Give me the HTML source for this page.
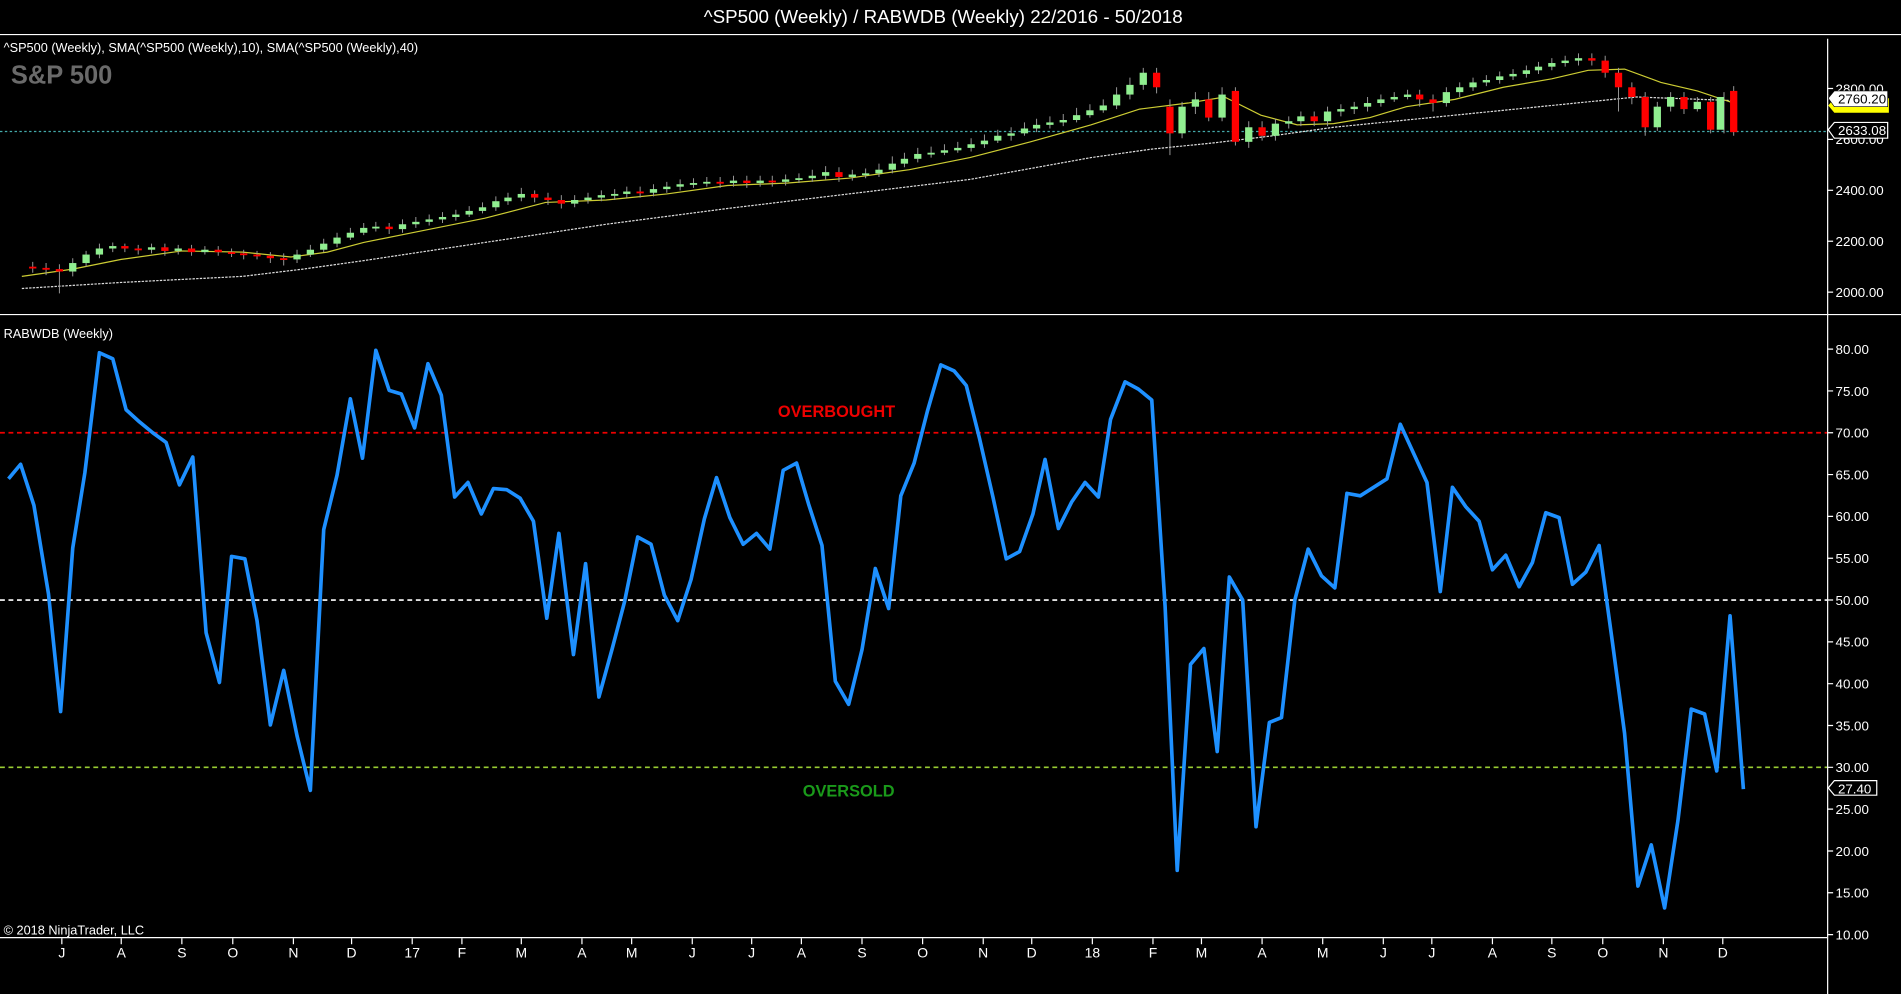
<!DOCTYPE html>
<html><head><meta charset="utf-8">
<style>
html,body{margin:0;padding:0;background:#000;overflow:hidden}
svg{display:block}
text{font-family:"Liberation Sans",Arial,sans-serif}
</style></head>
<body>
<svg width="1901" height="994" viewBox="0 0 1568 820" preserveAspectRatio="none" xmlns="http://www.w3.org/2000/svg">
<rect width="1568" height="820" fill="#000"/>
<text x="778" y="19" fill="#fff" font-size="15.5" text-anchor="middle">^SP500 (Weekly) / RABWDB (Weekly)  22/2016 - 50/2018</text>
<line x1="0" y1="28.5" x2="1568" y2="28.5" stroke="#fff" stroke-width="1"/>
<line x1="0" y1="259.5" x2="1568" y2="259.5" stroke="#fff" stroke-width="1"/>
<line x1="0" y1="773.5" x2="1507" y2="773.5" stroke="#fff" stroke-width="1"/>
<line x1="1507.5" y1="32" x2="1507.5" y2="820" stroke="#fff" stroke-width="1"/>
<text x="3" y="43" fill="#fff" font-size="10.5">^SP500 (Weekly),  SMA(^SP500 (Weekly),10),  SMA(^SP500 (Weekly),40)</text>
<text x="9" y="69" fill="#6a6a6a" font-size="21" font-weight="bold">S&amp;P 500</text>
<text x="3" y="279" fill="#fff" font-size="10.5">RABWDB (Weekly)</text>
<text x="3" y="771" fill="#fff" font-size="10.5">© 2018 NinjaTrader, LLC</text>

<line x1="0" y1="108.5" x2="1507" y2="108.5" stroke="#4aa" stroke-dasharray="2,2" stroke-width="1"/>

<!-- SMAs -->
<polyline fill="none" stroke="#ddd" stroke-width="1" stroke-dasharray="2,1" points="18,238 100,233 200,228 250,222 300,215 400,200 500,185 600,172 700,160 800,148 900,130 950,123 1000,118 1050,112 1100,105 1200,95 1300,85 1350,80 1430,83"/>
<polyline fill="none" stroke="#cc3" stroke-width="1" points="18,228 60,222 100,214 150,207 200,208 240,212 270,208 300,200 350,190 400,180 450,167 500,165 550,160 600,153 650,151 700,147 750,140 800,130 850,117 900,103 940,90 980,85 1010,80 1040,95 1070,103 1100,102 1130,97 1160,88 1200,82 1240,72 1280,65 1310,58 1340,57 1370,68 1400,75 1430,85"/>

<!-- wicks -->
<path stroke="#999" stroke-width="0.8" fill="none" d="M27 216V225M38 217V227M49 218V242M60 213V228M71 207V220M82 201V213M93 200V208M103 201V208M114 202V210M125 201V209M136 201V211M147 202V210M158 202V211M169 203V210M180 203V211M191 205V212M201 206V214M212 207V214M223 208V217M234 209V219M245 206V217M256 202V212M267 197V208M278 192V204M289 188V198M300 184V194M310 183V191M321 184V193M332 181V192M343 179V188M354 177V186M365 175V184M376 173V182M387 170V179M398 167V176M409 162V174M419 159V169M430 155V166M441 157V167M452 159V169M463 161V172M474 161V171M485 159V168M496 157V166M507 156V165M517 154V163M528 154V163M539 152V162M550 150V159M561 148V157M572 147V155M583 146V154M594 146V155M605 145V154M616 145V155M627 145V154M637 145V154M648 144V153M659 143V151M670 140V150M681 137V148M692 138V150M703 140V149M714 139V147M725 135V146M736 129V143M746 126V138M757 122V134M768 121V130M779 119V128M790 117V126M801 114V125M812 111V122M823 107V118M834 105V116M845 101V112M855 98V109M866 96V106M877 94V104M888 89V101M899 86V97M910 82V93M921 72V90M932 64V82M943 56V74M954 56V77M965 82V128M975 84V114M986 76V94M997 76V100M1008 72V100M1019 72V120M1030 100V122M1041 100V116M1052 98V116M1063 96V106M1073 92V104M1084 92V104M1095 88V104M1106 86V96M1117 84V94M1128 80V92M1139 78V88M1150 76V84M1161 74V82M1171 74V88M1182 78V92M1193 72V88M1204 68V80M1215 64V75M1226 62V71M1237 59V69M1248 57V66M1259 54V64M1269 51V61M1280 48V58M1291 46V55M1302 44V54M1313 44V54M1324 46V64M1335 56V92M1346 68V86M1357 76V112M1367 84V108M1378 76V92M1389 76V94M1400 80V92M1411 80V110M1422 76V110M1430 71V112"/>
<!-- red bodies -->
<g fill="#f00">
<rect x="24" y="220" width="6" height="1.5"/><rect x="35" y="221" width="6" height="1.5"/><rect x="46" y="222" width="6" height="2"/>
<rect x="100" y="203" width="6" height="2"/><rect x="111" y="205" width="6" height="1.5"/><rect x="133" y="204" width="6" height="3"/><rect x="155" y="205" width="6" height="3"/><rect x="177" y="206" width="6" height="2"/><rect x="188" y="208" width="6" height="1.5"/><rect x="198" y="209" width="6" height="1.5"/><rect x="209" y="210" width="6" height="1.5"/><rect x="220" y="211" width="6" height="2"/><rect x="231" y="213" width="6" height="1.5"/>
<rect x="318" y="187" width="6" height="2"/><rect x="438" y="160" width="6" height="3"/><rect x="449" y="163" width="6" height="2"/><rect x="460" y="165" width="6" height="3"/><rect x="525" y="158" width="6" height="1.5"/><rect x="591" y="150" width="6" height="1.5"/><rect x="613" y="149" width="6" height="2"/><rect x="634" y="149" width="6" height="1.5"/><rect x="689" y="142" width="6" height="4"/>
<rect x="951" y="60" width="6" height="12"/><rect x="962" y="88" width="6" height="22"/><rect x="994" y="82" width="6" height="15"/><rect x="1016" y="75" width="6" height="42"/><rect x="1038" y="105" width="6" height="7"/><rect x="1081" y="96" width="6" height="4"/><rect x="1168" y="78" width="6" height="4"/><rect x="1179" y="82" width="6" height="3"/><rect x="1310" y="48" width="6" height="2"/><rect x="1321" y="50" width="6" height="10"/><rect x="1332" y="60" width="6" height="12"/><rect x="1343" y="72" width="6" height="8"/><rect x="1354" y="80" width="6" height="25"/><rect x="1386" y="80" width="6" height="10"/><rect x="1408" y="84" width="6" height="23"/><rect x="1427" y="75" width="6" height="34"/>
</g>
<!-- green bodies -->
<g fill="#90ee90">
<rect x="57" y="217" width="6" height="7"/><rect x="68" y="210" width="6" height="7"/><rect x="79" y="205" width="6" height="5"/><rect x="90" y="203" width="6" height="2"/><rect x="122" y="204" width="6" height="2"/><rect x="144" y="205" width="6" height="2"/><rect x="166" y="206" width="6" height="2"/>
<rect x="242" y="210" width="6" height="4"/><rect x="253" y="206" width="6" height="4"/><rect x="264" y="201" width="6" height="5"/><rect x="275" y="196" width="6" height="5"/><rect x="286" y="192" width="6" height="4"/><rect x="297" y="188" width="6" height="4"/><rect x="307" y="187" width="6" height="1.5"/><rect x="329" y="185" width="6" height="4"/><rect x="340" y="183" width="6" height="2"/><rect x="351" y="181" width="6" height="2"/><rect x="362" y="179" width="6" height="2"/><rect x="373" y="177" width="6" height="2"/><rect x="384" y="174" width="6" height="3"/><rect x="395" y="171" width="6" height="3"/><rect x="406" y="166" width="6" height="5"/><rect x="416" y="163" width="6" height="3"/><rect x="427" y="160" width="6" height="3"/>
<rect x="471" y="165" width="6" height="3"/><rect x="482" y="163" width="6" height="2"/><rect x="493" y="161" width="6" height="2"/><rect x="504" y="160" width="6" height="1.5"/><rect x="514" y="158" width="6" height="2"/><rect x="536" y="156" width="6" height="3"/><rect x="547" y="154" width="6" height="2"/><rect x="558" y="152" width="6" height="2"/><rect x="569" y="151" width="6" height="1.5"/><rect x="580" y="150" width="6" height="1.5"/><rect x="602" y="149" width="6" height="2"/><rect x="624" y="149" width="6" height="2"/><rect x="645" y="148" width="6" height="2"/><rect x="656" y="147" width="6" height="1.5"/><rect x="667" y="145" width="6" height="2"/><rect x="678" y="142" width="6" height="3"/><rect x="700" y="144" width="6" height="2"/><rect x="711" y="143" width="6" height="1.5"/><rect x="722" y="140" width="6" height="3"/><rect x="733" y="135" width="6" height="5"/><rect x="743" y="131" width="6" height="4"/><rect x="754" y="127" width="6" height="4"/><rect x="765" y="126" width="6" height="1.5"/><rect x="776" y="124" width="6" height="2"/><rect x="787" y="122" width="6" height="2"/><rect x="798" y="119" width="6" height="3"/><rect x="809" y="116" width="6" height="3"/><rect x="820" y="112" width="6" height="4"/><rect x="831" y="110" width="6" height="2"/><rect x="842" y="106" width="6" height="4"/><rect x="852" y="103" width="6" height="3"/><rect x="863" y="101" width="6" height="2"/><rect x="874" y="99" width="6" height="2"/><rect x="885" y="95" width="6" height="4"/><rect x="896" y="91" width="6" height="4"/><rect x="907" y="87" width="6" height="4"/><rect x="918" y="78" width="6" height="9"/><rect x="929" y="70" width="6" height="8"/><rect x="940" y="60" width="6" height="10"/>
<rect x="972" y="88" width="6" height="22"/><rect x="983" y="82" width="6" height="6"/><rect x="1005" y="78" width="6" height="19"/><rect x="1027" y="105" width="6" height="12"/><rect x="1049" y="102" width="6" height="10"/><rect x="1060" y="100" width="6" height="2"/><rect x="1070" y="96" width="6" height="4"/><rect x="1092" y="92" width="6" height="8"/><rect x="1103" y="90" width="6" height="2"/><rect x="1114" y="88" width="6" height="2"/><rect x="1125" y="85" width="6" height="3"/><rect x="1136" y="82" width="6" height="3"/><rect x="1147" y="80" width="6" height="2"/><rect x="1158" y="78" width="6" height="2"/><rect x="1190" y="76" width="6" height="9"/><rect x="1201" y="72" width="6" height="4"/><rect x="1212" y="68" width="6" height="4"/><rect x="1223" y="66" width="6" height="2"/><rect x="1234" y="63" width="6" height="3"/><rect x="1245" y="61" width="6" height="2"/><rect x="1256" y="58" width="6" height="3"/><rect x="1266" y="55" width="6" height="3"/><rect x="1277" y="52" width="6" height="3"/><rect x="1288" y="50" width="6" height="2"/><rect x="1299" y="48" width="6" height="2"/><rect x="1364" y="88" width="6" height="17"/><rect x="1375" y="80" width="6" height="8"/><rect x="1397" y="84" width="6" height="6"/><rect x="1416" y="80" width="6" height="27"/>
</g>

<!-- price axis -->
<g fill="#fff" font-size="11" stroke-width="1">
<line x1="1507" y1="73" x2="1512" y2="73" stroke="#fff"/><text x="1514" y="77">2800.00</text>
<line x1="1507" y1="115" x2="1512" y2="115" stroke="#fff"/><text x="1514" y="119">2600.00</text>
<line x1="1507" y1="157" x2="1512" y2="157" stroke="#fff"/><text x="1514" y="161">2400.00</text>
<line x1="1507" y1="199" x2="1512" y2="199" stroke="#fff"/><text x="1514" y="203">2200.00</text>
<line x1="1507" y1="241" x2="1512" y2="241" stroke="#fff"/><text x="1514" y="245">2000.00</text>
</g>
<polygon points="1508,87 1513,81 1558,81 1558,93 1513,93" fill="#ff0"/>
<polygon points="1508,81 1513,75 1557,75 1557,88 1513,88" fill="#fff" stroke="#000" stroke-width=".5"/>
<text x="1516" y="85.5" font-size="11" fill="#000">2760.20</text>
<polygon points="1508,107 1513,101 1557,101 1557,114 1513,114" fill="#000" stroke="#fff"/>
<text x="1516" y="111.5" font-size="11" fill="#fff">2633.08</text>

<!-- oscillator axis -->
<g fill="#fff" font-size="11">
<path stroke="#fff" d="M1507 288H1512M1507 322.5H1512M1507 357H1512M1507 391.5H1512M1507 426H1512M1507 460.5H1512M1507 495H1512M1507 529.5H1512M1507 564H1512M1507 598.5H1512M1507 633H1512M1507 667.5H1512M1507 702H1512M1507 736.5H1512M1507 771H1512"/>
<text x="1514" y="292">80.00</text><text x="1514" y="326.5">75.00</text><text x="1514" y="361">70.00</text><text x="1514" y="395.5">65.00</text><text x="1514" y="430">60.00</text><text x="1514" y="464.5">55.00</text><text x="1514" y="499">50.00</text><text x="1514" y="533.5">45.00</text><text x="1514" y="568">40.00</text><text x="1514" y="602.5">35.00</text><text x="1514" y="637">30.00</text><text x="1514" y="671.5">25.00</text><text x="1514" y="706">20.00</text><text x="1514" y="740.5">15.00</text><text x="1514" y="775">10.00</text>
</g>
<line x1="0" y1="357" x2="1507" y2="357" stroke="#e00" stroke-dasharray="4,3" stroke-width="1.4"/>
<line x1="0" y1="495" x2="1507" y2="495" stroke="#fff" stroke-dasharray="4,3" stroke-width="1.4"/>
<line x1="0" y1="633" x2="1507" y2="633" stroke="#9c3" stroke-dasharray="4,3" stroke-width="1.4"/>
<text x="690" y="344" fill="#e00" font-size="13.5" font-weight="bold" text-anchor="middle">OVERBOUGHT</text>
<text x="700" y="657" fill="#1a9a1a" font-size="13.5" font-weight="bold" text-anchor="middle">OVERSOLD</text>
<polyline fill="none" stroke="#1e90ff" stroke-width="3" stroke-linejoin="round" points="7,395 17,383 28,417 40,490 50,587 60,452 70,390 82,291 93,296 104,338 115,348 126,357 137,365 148,400 159,377 170,522 181,563 191,459 202,461 212,512 223,598 234,553 245,607 256,652 267,437 278,392 289,329 299,378 310,289 321,322 331,325 342,353 353,300 364,326 375,410 386,398 397,424 407,403 418,404 429,411 440,430 451,510 461,440 473,540 483,465 494,575 505,535 515,497 526,443 537,449 548,491 559,512 570,478 581,428 591,394 602,427 613,449 624,440 635,453 646,388 657,382 667,416 678,450 689,562 700,581 711,536 722,469 733,502 743,409 754,382 765,339 776,301 787,306 797,318 808,362 819,410 830,461 841,455 852,424 862,379 873,436 884,414 895,398 906,410 916,346 928,315 939,321 950,330 961,500 971,718 982,548 993,535 1004,620 1014,476 1025,495 1036,682 1047,596 1057,592 1068,495 1079,453 1090,475 1101,485 1111,407 1122,409 1133,402 1144,395 1155,350 1166,374 1177,398 1188,488 1198,402 1209,418 1220,430 1231,470 1242,458 1253,484 1264,464 1275,423 1286,427 1297,482 1308,472 1319,450 1330,530 1340,605 1351,731 1362,697 1373,749 1384,677 1395,585 1406,589 1416,636 1427,508 1438,651"/>
<polygon points="1508,650 1513,644 1548,644 1548,656 1513,656" fill="#000" stroke="#fff"/>
<text x="1516" y="654.5" font-size="11" fill="#fff">27.40</text>

<!-- time axis -->
<path stroke="#fff" d="M51 774V779M100 774V779M150 774V779M192 774V779M242 774V779M290 774V779M340 774V779M381 774V779M430 774V779M480 774V779M521 774V779M571 774V779M620 774V779M661 774V779M711 774V779M761 774V779M811 774V779M851 774V779M901 774V779M951 774V779M991 774V779M1041 774V779M1091 774V779M1141 774V779M1181 774V779M1231 774V779M1280 774V779M1322 774V779M1372 774V779M1421 774V779"/>
<g fill="#fff" font-size="11.5" text-anchor="middle">
<text x="51" y="790">J</text><text x="100" y="790">A</text><text x="150" y="790">S</text><text x="192" y="790">O</text><text x="242" y="790">N</text><text x="290" y="790">D</text><text x="340" y="790">17</text><text x="381" y="790">F</text><text x="430" y="790">M</text><text x="480" y="790">A</text><text x="521" y="790">M</text><text x="571" y="790">J</text><text x="620" y="790">J</text><text x="661" y="790">A</text><text x="711" y="790">S</text><text x="761" y="790">O</text><text x="811" y="790">N</text><text x="851" y="790">D</text><text x="901" y="790">18</text><text x="951" y="790">F</text><text x="991" y="790">M</text><text x="1041" y="790">A</text><text x="1091" y="790">M</text><text x="1141" y="790">J</text><text x="1181" y="790">J</text><text x="1231" y="790">A</text><text x="1280" y="790">S</text><text x="1322" y="790">O</text><text x="1372" y="790">N</text><text x="1421" y="790">D</text>
</g>
</svg>
</body></html>
